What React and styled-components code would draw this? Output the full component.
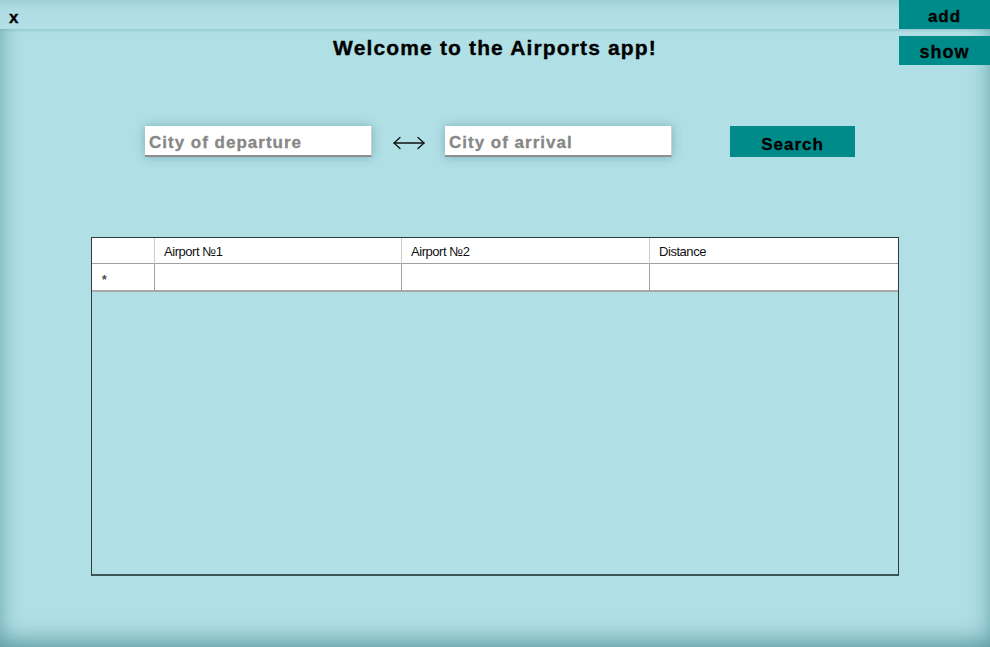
import React from "react";
import styled, { createGlobalStyle } from "styled-components";

const Global = createGlobalStyle`
  html, body { margin: 0; padding: 0; }
  body { background: #b0dfe5; font-family: "Liberation Sans", Arial, sans-serif; }
`;

const Page = styled.div`
  width: 990px;
  height: 647px;
  background: #b0dfe5;
  box-shadow: inset 0 0 22px rgba(40, 110, 120, 0.45), inset 0 -18px 22px -10px rgba(40, 110, 120, 0.35);
  display: flex;
  flex-direction: column;
  overflow: hidden;
`;

const TopBar = styled.div`
  height: 29px;
  display: flex;
  align-items: stretch;
  justify-content: space-between;
  background: linear-gradient(#9fd2d8 0px, #afdde3 10px, #b2e0e6 29px);
  box-shadow: 0 1px 3px rgba(40, 110, 120, 0.25);
  position: relative;
`;

const Close = styled.span`
  font-weight: bold;
  font-size: 17px;
  color: #000;
  padding-left: 9px;
  line-height: 35px;
  -webkit-text-stroke: 0.3px #000;
`;

const ActionButton = styled.button`
  width: 91px;
  height: 29px;
  border: none;
  margin: 0;
  padding: ${(p) => (p.$top ? 4 : 3)}px 0 0;
  background: #008b8b;
  color: #000;
  font-family: "Liberation Sans", Arial, sans-serif;
  font-weight: bold;
  font-size: ${(p) => p.$size || 17}px;
  letter-spacing: 1px;
  -webkit-text-stroke: 0.3px #000;
`;

const TitleRow = styled.div`
  margin-top: 7px;
  height: 29px;
  display: grid;
  grid-template-columns: 1fr auto 1fr;
  align-items: center;
`;

const Title = styled.h1`
  grid-column: 2;
  margin: 0;
  font-size: 21px;
  font-weight: bold;
  letter-spacing: 1.15px;
  color: #000;
  line-height: 24px;
  padding-bottom: 5px;
  -webkit-text-stroke: 0.35px #000;
`;

const RightCell = styled.div`
  grid-column: 3;
  justify-self: end;
  display: flex;
`;

const SearchRow = styled.div`
  margin-top: 61px;
  padding-left: 145px;
  display: flex;
  align-items: center;
  height: 31px;
`;

const CityInput = styled.div`
  width: 222px;
  height: 29px;
  background: #fff;
  border-bottom: 2px solid #8e8e8e;
  border-right: 1px solid #cfcfcf;
  box-shadow: 0 0 9px rgba(60, 120, 130, 0.45);
  color: #878787;
  font-weight: bold;
  font-size: 17px;
  letter-spacing: 1px;
  line-height: 33px;
  padding-left: 4px;
  box-sizing: content-box;
  white-space: nowrap;
  -webkit-text-stroke: 0.3px #878787;
`;

const Arrow = styled.div`
  width: 73px;
  display: flex;
  justify-content: center;
  padding-top: 2px;
`;

const SearchButton = styled.button`
  margin-left: 58px;
  width: 125px;
  height: 31px;
  border: none;
  padding: 4px 0 0;
  background: #008b8b;
  color: #000;
  font-family: "Liberation Sans", Arial, sans-serif;
  font-weight: bold;
  font-size: 17px;
  letter-spacing: 1px;
  line-height: 29px;
  -webkit-text-stroke: 0.3px #000;
`;

const Grid = styled.div`
  margin-top: 80px;
  margin-left: 91px;
  width: 806px;
  height: 336px;
  border: 1px solid #2e3b3d;
  border-bottom: 2px solid #3e5457;
  display: grid;
  grid-template-columns: 63px 247px 248px 248px;
  grid-template-rows: 26px 28px;
  align-content: start;
  font-size: 13px;
  color: #111;
`;

const HeaderCell = styled.div`
  background: #fff;
  border-right: ${(p) => (p.$last ? "none" : "1px solid #cdcdcd")};
  border-bottom: 1px solid #a0a0a0;
  padding-left: ${(p) => (p.$corner ? 0 : 9)}px;
  line-height: 28px;
  letter-spacing: -0.45px;
  white-space: nowrap;
`;

const Cell = styled.div`
  background: #fff;
  border-right: ${(p) => (p.$last ? "none" : "1px solid #a0a0a0")};
  border-bottom: 2px solid #a8a8a8;
  display: flex;
  align-items: center;
  padding-left: ${(p) => (p.$rowHead ? 10 : 0)}px;
`;

const Star = styled.span`
  color: #444;
  font-size: 12px;
  font-weight: bold;
  line-height: 1;
  margin-top: 6px;
`;

export default function App() {
  return (
    <>
      <Global />
      <Page>
        <TopBar>
          <Close>x</Close>
          <ActionButton $top>add</ActionButton>
        </TopBar>
        <TitleRow>
          <Title>Welcome to the Airports app!</Title>
          <RightCell>
            <ActionButton $size={18}>show</ActionButton>
          </RightCell>
        </TitleRow>
        <SearchRow>
          <CityInput>City of departure</CityInput>
          <Arrow>
            <svg width="34" height="14" viewBox="0 0 34 14" fill="none" stroke="#111" strokeWidth="1.3" strokeLinecap="round" strokeLinejoin="round">
              <path d="M2 7 H32" />
              <path d="M8 1.5 L2 7 L8 12.5" />
              <path d="M26 1.5 L32 7 L26 12.5" />
            </svg>
          </Arrow>
          <CityInput>City of arrival</CityInput>
          <SearchButton>Search</SearchButton>
        </SearchRow>
        <Grid>
          <HeaderCell $corner />
          <HeaderCell>Airport №1</HeaderCell>
          <HeaderCell>Airport №2</HeaderCell>
          <HeaderCell $last>Distance</HeaderCell>
          <Cell $rowHead>
            <Star>*</Star>
          </Cell>
          <Cell />
          <Cell />
          <Cell $last />
        </Grid>
      </Page>
    </>
  );
}
